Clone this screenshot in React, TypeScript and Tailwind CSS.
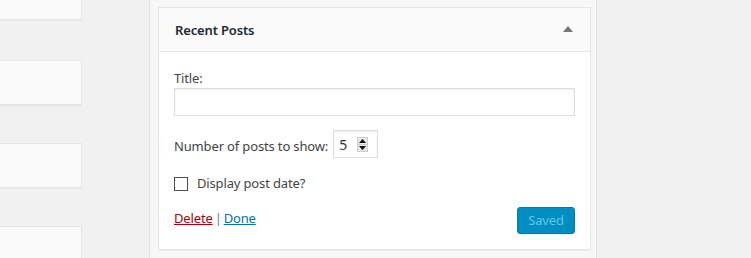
import React from "react";

function LeftBox({ mt }: { mt: string }) {
  return (
    <div
      className={`${mt} shrink-0 h-[45px] w-[92px] -ml-[10px] bg-[#fafafa] border border-[#e5e5e5] shadow-[0_1px_1px_rgba(0,0,0,0.04)]`}
    />
  );
}

export default function App() {
  return (
    <div
      className="w-[751px] h-[258px] overflow-hidden bg-[#f1f1f1] flex items-start text-[13px] text-[#444] tracking-[-0.15px]"
      style={{ fontFamily: '"Segoe UI", "Noto Sans", "Open Sans", sans-serif' }}
    >
      <div className="flex flex-col w-[82px] shrink-0 -mt-[25px]">
        <LeftBox mt="mt-0" />
        <LeftBox mt="mt-[40px]" />
        <LeftBox mt="mt-[38px]" />
        <LeftBox mt="mt-[38px]" />
      </div>
      <div className="ml-[67px] w-[448px] h-[258px] shrink-0 border-x border-[#e2e2e2] bg-[#f7f7f7] pl-[8px] pr-[5px] pt-[7px]">
        <div className="bg-white border border-[#e5e5e5] shadow-[0_1px_1px_rgba(0,0,0,0.04)]">
          <div className="h-[44px] bg-[#fafafa] border-b border-[#e5e5e5] flex items-center justify-between pl-[16px] pr-[17px]">
            <span className="font-semibold text-[13px] text-[#23282d] mt-[2px]">Recent Posts</span>
            <svg width="10" height="6" viewBox="0 0 10 6" className="mt-[-1px]">
              <path d="M5 0 L10 6 L0 6 Z" fill="#72777c" />
            </svg>
          </div>
          <div className="pt-[16px] pl-[15px] pr-[15px] pb-[15px]">
            <div className="h-[20px] leading-[20px]">Title:</div>
            <div className="h-[28px] border border-[#ddd] shadow-[inset_0_1px_2px_rgba(0,0,0,0.07)] bg-white" />
            <div className="mt-[14px] flex items-center">
              <span className="mt-[6px]">Number of posts to show:</span>
              <div className="ml-[5px] h-[28px] w-[45px] border border-[#ddd] shadow-[inset_0_1px_2px_rgba(0,0,0,0.07)] bg-white flex items-center pl-[5px] pr-[9px] justify-between">
                <span className="text-[14px] text-[#32373c]">5</span>
                <div className="flex flex-col w-[11px] h-[15px] border border-[#cfcfcf] bg-[#e8e8e8]">
                  <div className="flex-1 flex items-center justify-center border-b border-[#cfcfcf]">
                    <svg width="7" height="4" viewBox="0 0 7 4"><path d="M3.5 0 L7 4 L0 4 Z" fill="#111" /></svg>
                  </div>
                  <div className="flex-1 flex items-center justify-center">
                    <svg width="7" height="4" viewBox="0 0 7 4"><path d="M0 0 L7 0 L3.5 4 Z" fill="#111" /></svg>
                  </div>
                </div>
              </div>
            </div>
            <div className="mt-[16px] h-[18px] flex items-center">
              <div className="w-[14px] h-[14px] mt-[2px] border border-[#4a4a4a] bg-white" />
              <span className="ml-[9px] mt-[1px]">Display post date?</span>
            </div>
            <div className="mt-[15px] flex items-start justify-between">
              <div className="mt-[2px] flex">
                <a className="text-[#a00] underline">Delete</a>
                <span className="text-[#72777c] mx-[2px]">|</span>
                <a className="text-[#0073aa] underline">Done</a>
              </div>
              <div className="h-[27px] w-[58px] rounded-[3px] bg-[#008ec2] border border-[#007cb2] text-[#66c6e4] flex items-center justify-center text-[13px]">
                Saved
              </div>
            </div>
          </div>
        </div>
      </div>
    </div>
  );
}
